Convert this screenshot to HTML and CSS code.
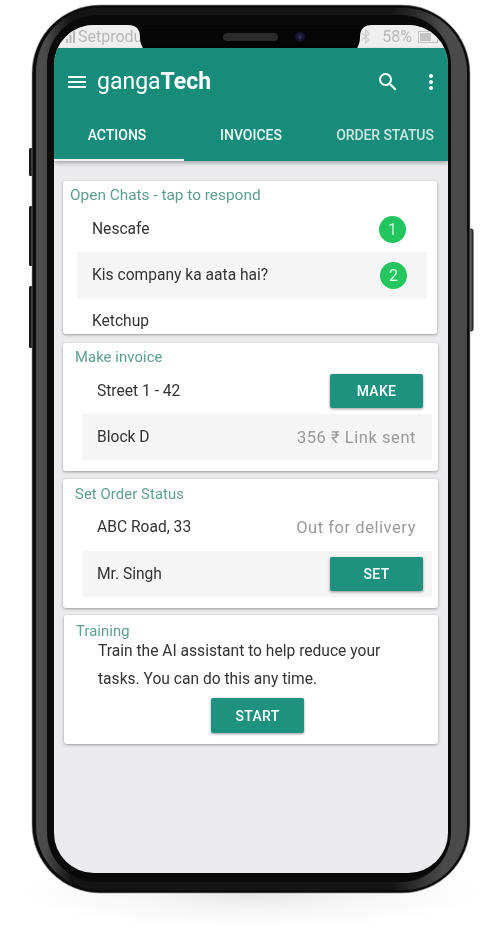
FILE: index.html
```html
<!DOCTYPE html>
<html lang="en">
<head>
<meta charset="utf-8">
<title>gangaTech</title>
<link rel="stylesheet" href="styles.css">
</head>
<body>
<div class="stage">
  <svg class="frame" width="502" height="929" viewBox="0 0 502 929" aria-hidden="true">
    <defs>
      <linearGradient id="band" gradientUnits="userSpaceOnUse" x1="32" y1="0" x2="470" y2="0">
        <stop offset="0" stop-color="#4b4b4b"/>
        <stop offset="0.03" stop-color="#4b4b4b"/>
        <stop offset="0.09" stop-color="#141414"/>
        <stop offset="0.82" stop-color="#141414"/>
        <stop offset="0.94" stop-color="#4a4a4a"/>
        <stop offset="1" stop-color="#4a4a4a"/>
      </linearGradient>
      <radialGradient id="floor">
        <stop offset="0" stop-color="#000" stop-opacity="0.10"/>
        <stop offset="0.5" stop-color="#000" stop-opacity="0.035"/>
        <stop offset="1" stop-color="#000" stop-opacity="0"/>
      </radialGradient>
    </defs>
    <ellipse cx="251" cy="892" rx="235" ry="38" fill="url(#floor)"/>
    <rect x="29" y="148" width="5" height="28" rx="1.5" fill="#161616"/>
    <rect x="29" y="206" width="5" height="60" rx="1.5" fill="#161616"/>
    <rect x="29" y="286" width="5" height="62" rx="1.5" fill="#161616"/>
    <rect x="469" y="229" width="4" height="102" rx="2" fill="#4a4a4a" stroke="#111" stroke-width="1"/>
    <rect x="32" y="5" width="438" height="888" rx="68" fill="#0c0c0c" stroke="#9a9a9a" stroke-width="0.6"/>
    <rect x="36" y="8" width="431" height="882" rx="64" fill="url(#band)"/>
    <rect x="47" y="15" width="404" height="867" rx="50" fill="#0a0a0a"/>
    <rect x="55" y="21" width="392" height="858" rx="44" fill="#0a0a0a"/>
  </svg>

  <div class="screen">
    <div class="status">
      <span class="status-left">
        <svg class="signal" width="9" height="12" viewBox="0 0 9 12"><path fill="#b5b5b5" d="M0 8h2v4H0zM3.500 4h2v8h-2zM7 0h2v12H7z"/></svg>
        <span>Setproduct</span>
      </span>
      <span class="status-right">
        <svg class="bt" width="9" height="15" viewBox="0 0 9 15"><path fill="none" stroke="#cfcfcf" stroke-width="1.200" d="M1 4l7 6.500L4.500 14V1L8 4.500 1 11"/></svg>
        <span>58%</span>
        <svg class="batt" width="22" height="12" viewBox="0 0 22 12"><rect x="0.500" y="0.500" width="19" height="11" fill="none" stroke="#c4c4c4"/><rect x="2" y="2" width="11" height="8" fill="#c4c4c4"/><rect x="20" y="4" width="2" height="4" fill="#c4c4c4"/></svg>
      </span>
    </div>
    <svg class="notch" width="244" height="33" viewBox="0 0 244 33" aria-hidden="true">
      <path fill="#050505" d="M0 0H244C236 0 232 4 232 12C232 25 222 33 210 33H39C22 33 12 25 12 12C12 4 8 0 0 0Z"/>
      <rect x="95" y="8" width="55" height="8" rx="4" fill="#2b2b2b"/>
      <circle cx="172" cy="12" r="5" fill="#14142a"/>
      <circle cx="172" cy="12" r="2" fill="#2c2c5a"/>
    </svg>

    <header class="appbar">
      <div class="toolbar">
        <svg class="icon" width="24" height="24" viewBox="0 0 24 24"><path fill="#fff" d="M3 18h18v-2H3v2zm0-5h18v-2H3v2zm0-7v2h18V6H3z"/></svg>
        <h1 class="brand">ganga<b>Tech</b></h1>
        <span class="spacer"></span>
        <svg class="icon" width="24" height="24" viewBox="0 0 24 24"><path fill="#fff" d="M15.500 14h-.79l-.28-.27A6.470 6.470 0 0 0 16 9.500 6.500 6.500 0 1 0 9.500 16c1.610 0 3.090-.59 4.230-1.570l.27.28v.79l5 4.990L20.490 19l-4.990-5zm-6 0C7.010 14 5 11.990 5 9.500S7.010 5 9.500 5 14 7.010 14 9.500 11.990 14 9.500 14z"/></svg>
        <svg class="icon" width="24" height="24" viewBox="0 0 24 24"><path fill="#fff" d="M12 8c1.100 0 2-.9 2-2s-.9-2-2-2-2 .9-2 2 .9 2 2 2zm0 2c-1.100 0-2 .9-2 2s.9 2 2 2 2-.9 2-2-.9-2-2-2zm0 6c-1.100 0-2 .9-2 2s.9 2 2 2 2-.9 2-2-.9-2-2-2z"/></svg>
      </div>
      <nav class="tabs">
        <div class="tab tab-active">ACTIONS</div>
        <div class="tab tab-mid">INVOICES</div>
        <div class="tab tab-last">ORDER STATUS</div>
      </nav>
    </header>

    <main class="content">
      <section class="card card-chats">
        <h2 class="card-title title-chats">Open Chats - tap to respond</h2>
        <div class="row chat-row"><span>Nescafe</span><span class="badge">1</span></div>
        <div class="row chat-row shaded"><span>Kis company ka aata hai?</span><span class="badge badge-two">2</span></div>
        <div class="row chat-row"><span>Ketchup</span></div>
      </section>

      <section class="card card-invoice">
        <h2 class="card-title title-invoice">Make invoice</h2>
        <div class="row item-row"><span>Street 1 - 42</span><button class="btn">MAKE</button></div>
        <div class="row item-row shaded"><span>Block D</span><span class="note">356 ₹ Link sent</span></div>
      </section>

      <section class="card card-status">
        <h2 class="card-title">Set Order Status</h2>
        <div class="row item-row item-gap"><span>ABC Road, 33</span><span class="note">Out for delivery</span></div>
        <div class="row item-row shaded"><span>Mr. Singh</span><button class="btn">SET</button></div>
      </section>

      <section class="card card-training">
        <h2 class="card-title title-tight">Training</h2>
        <p class="train-text">Train the AI assistant to help reduce your tasks. You can do this any time.</p>
        <button class="btn btn-start">START</button>
      </section>
    </main>
  </div>
</div>
</body>
</html>
```

FILE: styles.css
```css
* { box-sizing: border-box; }

html, body {
  margin: 0;
  padding: 0;
  background: #fff;
}

.stage {
  position: relative;
  width: 502px;
  height: 929px;
  overflow: hidden;
  padding: 25px 0 0 54px;
  font-family: Roboto, "Liberation Sans", sans-serif;
}

.frame {
  position: absolute;
  left: 0;
  top: 0;
}

.screen {
  position: relative;
  width: 394px;
  height: 848px;
  border-radius: 40px;
  overflow: hidden;
  background: #ebebed;
  filter: blur(0.35px);
}

.status {
  height: 23px;
  background: #efefef;
  display: flex;
  justify-content: space-between;
  align-items: center;
  color: #b8b8b8;
  font-size: 16px;
  padding: 0 8px 0 12px;
}

.status-left, .status-right {
  display: flex;
  align-items: center;
}

.signal { margin-right: 3px; }
.bt { margin-right: 12px; }
.batt { margin-left: 6px; }

.notch {
  position: absolute;
  left: 74px;
  top: 0;
}

.appbar {
  background: #178c7b;
  color: #fff;
  position: relative;
  box-shadow: 0 2px 4px rgba(0, 0, 0, 0.3);
}

.toolbar {
  height: 68px;
  display: flex;
  align-items: center;
  gap: 19px;
  padding: 0 5px 0 11px;
}

.icon { flex: none; }

.brand {
  margin: 0 0 0 -11px;
  font-size: 23px;
  font-weight: 400;
  line-height: 30px;
  font-family: Roboto, "Liberation Sans", sans-serif;
}

.brand b { font-weight: 700; }

.spacer { flex: 1; }

.tabs {
  display: flex;
  height: 45px;
  font-size: 14px;
  font-weight: 500;
}

.tab {
  width: 130px;
  padding-bottom: 7px;
  display: flex;
  justify-content: center;
  align-items: center;
  color: rgba(255, 255, 255, 0.92);
}

.tab-active {
  border-bottom: 2px solid #f2f2f2;
  padding-bottom: 5px;
  padding-right: 4px;
  color: #fff;
}

.tab-mid { width: 134px; }

.tab-last {
  padding-left: 4px;
  color: rgba(255, 255, 255, 0.78);
  white-space: nowrap;
  letter-spacing: -0.1px;
}

.content {
  padding-top: 20px;
  display: flex;
  flex-direction: column;
}

.card {
  background: #fff;
  border-radius: 3px;
  width: 375px;
  margin-left: 9px;
  box-shadow: 0 1px 3px rgba(0, 0, 0, 0.35);
}

.card-chats {
  width: 374px;
  height: 153px;
  overflow: hidden;
  padding-top: 4px;
}

.card-invoice {
  margin-top: 9px;
  padding: 4px 0 11px;
}

.card-status {
  margin-top: 8px;
  padding: 5px 0 11px;
}

.card-training {
  margin-top: 7px;
  margin-left: 10px;
  width: 374px;
  padding: 11px 0 11px;
}

.card-title {
  margin: 0 0 0 12px;
  font-size: 14.800px;
  font-weight: 400;
  line-height: 20px;
  color: #5e9d90;
  letter-spacing: 0.1px;
}

.title-invoice { padding-bottom: 1px; }

.title-chats {
  margin-left: 7px;
  height: 21px;
  font-size: 15.400px;
  letter-spacing: 0;
}

.title-tight {
  line-height: 10px;
}

.row {
  display: flex;
  justify-content: space-between;
  align-items: center;
  width: 350px;
  font-size: 15.600px;
  color: #333;
}

.chat-row {
  height: 46px;
  margin-left: 14px;
  padding: 0 20px 0 15px;
}

.item-row {
  height: 46px;
  margin-left: 19px;
  padding: 0 9px 0 15px;
}

.item-row .note { margin-right: 7px; }

.item-gap { margin-bottom: 1px; }

.shaded { background: #f5f5f5; }

.badge {
  width: 27px;
  height: 27px;
  margin-right: 1px;
  border-radius: 50%;
  background: #22c55e;
  color: #c6f2d6;
  font-size: 16px;
  display: flex;
  align-items: center;
  justify-content: center;
}

.badge-two { margin-right: 0; color: #e8fbef; }

.note {
  color: #999;
  font-size: 16.500px;
  letter-spacing: 0.55px;
}

.btn {
  width: 93px;
  height: 34px;
  border: 0;
  padding: 0;
  border-radius: 2px;
  background: #1f917f;
  color: #fff;
  font: 500 14px Roboto, "Liberation Sans", sans-serif;
  letter-spacing: 0.3px;
  box-shadow: 0 1px 3px rgba(0, 0, 0, 0.4);
}

.btn-start {
  display: block;
  height: 35px;
  margin: 5px 0 0 147px;
}

.train-text {
  margin: 1px 0 0 34px;
  width: 300px;
  font-size: 15.600px;
  line-height: 28px;
  color: #333;
}
```
